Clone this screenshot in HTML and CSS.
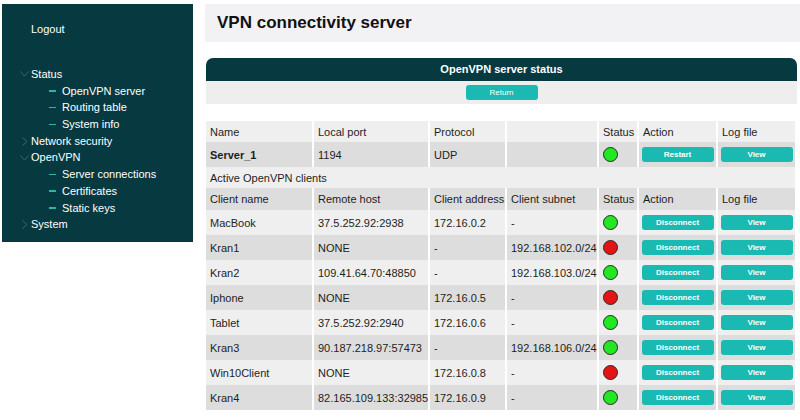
FILE: index.html
```html
<!DOCTYPE html>
<html lang="en">
<head>
<meta charset="utf-8">
<title>VPN connectivity server</title>
<link rel="stylesheet" href="styles.css">
</head>
<body>
<aside class="sidebar">
  <div class="logout">Logout</div>
  <ul class="nav">
    <li class="group open"><span class="chev"><svg width="9" height="6" viewBox="0 0 9 6"><path d="M0.5 0.5 L4.5 5 L8.5 0.5" fill="none" stroke="currentColor" stroke-width="1"/></svg></span>Status</li>
    <li class="sub"><span class="dash"></span>OpenVPN server</li>
    <li class="sub"><span class="dash"></span>Routing table</li>
    <li class="sub"><span class="dash"></span>System info</li>
    <li class="group"><span class="chev"><svg width="9" height="9" viewBox="0 0 9 9"><path d="M2.5 0.5 L7 4.5 L2.5 8.5" fill="none" stroke="currentColor" stroke-width="1"/></svg></span>Network security</li>
    <li class="group open"><span class="chev"><svg width="9" height="6" viewBox="0 0 9 6"><path d="M0.5 0.5 L4.5 5 L8.5 0.5" fill="none" stroke="currentColor" stroke-width="1"/></svg></span>OpenVPN</li>
    <li class="sub"><span class="dash"></span>Server connections</li>
    <li class="sub"><span class="dash"></span>Certificates</li>
    <li class="sub"><span class="dash"></span>Static keys</li>
    <li class="group"><span class="chev"><svg width="9" height="9" viewBox="0 0 9 9"><path d="M2.5 0.5 L7 4.5 L2.5 8.5" fill="none" stroke="currentColor" stroke-width="1"/></svg></span>System</li>
  </ul>
</aside>

<main class="main">
  <header class="page-title"><h1>VPN connectivity server</h1></header>

  <section class="panel">
    <div class="panel-head">OpenVPN server status</div>
    <div class="panel-bar"><button class="btn btn-return">Return</button></div>
  </section>

  <table class="status">
    <colgroup>
      <col class="c-name"><col class="c-host"><col class="c-addr"><col class="c-subnet"><col class="c-state"><col class="c-action"><col class="c-log">
    </colgroup>
    <tbody>
      <tr class="head"><td>Name</td><td>Local port</td><td>Protocol</td><td></td><td>Status</td><td>Action</td><td>Log file</td></tr>
      <tr class="row"><td class="strong">Server_1</td><td>1194</td><td>UDP</td><td></td><td><span class="dot on"></span></td><td class="act"><button class="btn">Restart</button></td><td class="act"><button class="btn">View</button></td></tr>
      <tr class="head"><td colspan="7" class="caption">Active OpenVPN clients</td></tr>
      <tr class="head tall"><td>Client name</td><td>Remote host</td><td>Client address</td><td>Client subnet</td><td>Status</td><td>Action</td><td>Log file</td></tr>
      <tr class="row"><td>MacBook</td><td>37.5.252.92:2938</td><td>172.16.0.2</td><td>-</td><td><span class="dot on"></span></td><td class="act"><button class="btn">Disconnect</button></td><td class="act"><button class="btn">View</button></td></tr>
      <tr class="row"><td>Kran1</td><td>NONE</td><td>-</td><td>192.168.102.0/24</td><td><span class="dot off"></span></td><td class="act"><button class="btn">Disconnect</button></td><td class="act"><button class="btn">View</button></td></tr>
      <tr class="row"><td>Kran2</td><td>109.41.64.70:48850</td><td>-</td><td>192.168.103.0/24</td><td><span class="dot on"></span></td><td class="act"><button class="btn">Disconnect</button></td><td class="act"><button class="btn">View</button></td></tr>
      <tr class="row"><td>Iphone</td><td>NONE</td><td>172.16.0.5</td><td>-</td><td><span class="dot off"></span></td><td class="act"><button class="btn">Disconnect</button></td><td class="act"><button class="btn">View</button></td></tr>
      <tr class="row"><td>Tablet</td><td>37.5.252.92:2940</td><td>172.16.0.6</td><td>-</td><td><span class="dot on"></span></td><td class="act"><button class="btn">Disconnect</button></td><td class="act"><button class="btn">View</button></td></tr>
      <tr class="row"><td>Kran3</td><td>90.187.218.97:57473</td><td>-</td><td>192.168.106.0/24</td><td><span class="dot on"></span></td><td class="act"><button class="btn">Disconnect</button></td><td class="act"><button class="btn">View</button></td></tr>
      <tr class="row"><td>Win10Client</td><td>NONE</td><td>172.16.0.8</td><td>-</td><td><span class="dot off"></span></td><td class="act"><button class="btn">Disconnect</button></td><td class="act"><button class="btn">View</button></td></tr>
      <tr class="row"><td>Kran4</td><td>82.165.109.133:32985</td><td>172.16.0.9</td><td>-</td><td><span class="dot on"></span></td><td class="act"><button class="btn">Disconnect</button></td><td class="act"><button class="btn">View</button></td></tr>
    </tbody>
  </table>
</main>
</body>
</html>
```

FILE: styles.css
```css
* { box-sizing: border-box; }

html, body {
  margin: 0;
  padding: 0;
  background: #ffffff;
}

body {
  display: flex;
  align-items: flex-start;
  font-family: "Liberation Sans", Arial, Helvetica, sans-serif;
  color: #1e1e1e;
  width: 800px;
  overflow: hidden;
}

/* ---------- sidebar ---------- */
.sidebar {
  flex: 0 0 191px;
  width: 191px;
  height: 238px;
  margin: 4px 0 0 2px;
  padding-top: 17px;
  background: #073a40;
  color: #ffffff;
  font-size: 11px;
}

.logout {
  padding-left: 29px;
  line-height: 17px;
}

.nav {
  list-style: none;
  margin: 28px 0 0;
  padding: 0;
}

.nav li {
  display: flex;
  align-items: center;
  height: 16.7px;
  line-height: 16.7px;
  white-space: nowrap;
}

.nav .group { padding-left: 16px; }

.chev {
  display: inline-flex;
  align-items: center;
  justify-content: center;
  width: 13px;
  margin-right: 0;
  color: #2f6a6d;
}

.nav .sub { padding-left: 47px; }

.dash {
  display: inline-block;
  width: 7px;
  height: 1.5px;
  margin-right: 6px;
  background: #2fb3a6;
}

/* ---------- main column ---------- */
.main {
  flex: 1;
  margin-left: 12px;
  padding-top: 4px;
}

.page-title {
  height: 38px;
  background: #f2f2f4;
  display: flex;
  align-items: center;
  padding-left: 12px;
}

.page-title h1 {
  margin: 0;
  font-size: 17px;
  font-weight: bold;
  color: #111;
}

.panel {
  margin: 16px 3px 0 1px;
}

.panel-head {
  height: 23px;
  line-height: 23px;
  background: #073a40;
  border-radius: 7px 7px 0 0;
  color: #fff;
  text-align: center;
  font-size: 11px;
  font-weight: bold;
}

.panel-bar {
  height: 23px;
  background: #eeeeee;
  display: flex;
  align-items: center;
  justify-content: center;
}

.btn {
  display: inline-block;
  width: 72px;
  height: 15px;
  padding: 0;
  border: 0;
  border-radius: 3px;
  background: #1ab9b1;
  color: #fff;
  font-family: "Liberation Sans", Arial, sans-serif;
  font-size: 8px;
  font-weight: bold;
  line-height: 15px;
  text-align: center;
}

.btn-return { font-weight: normal; }

/* ---------- status table ---------- */
.status {
  margin: 17px 0 0 1px;
  width: 589px;
  table-layout: fixed;
  border-collapse: separate;
  border-spacing: 0;
  font-size: 11px;
}

.c-name   { width: 106px; }
.c-host   { width: 116px; }
.c-addr   { width: 77px; }
.c-subnet { width: 92px; }
.c-state  { width: 40px; }
.c-action { width: 79px; }
.c-log    { width: 79px; }

.status td {
  padding: 0 0 0 4px;
  border-left: 2px solid #fff;
  white-space: nowrap;
  overflow: hidden;
  vertical-align: middle;
}

.status td:first-child { border-left: 0; }

.status tr { height: 25px; }
.status tr.head { height: 21px; }
.status tr.head.tall { height: 22px; }

.status tr:nth-child(odd) td { background: #efefef; }
.status tr:nth-child(even) td { background: #dddddd; }

.status td.strong { font-weight: bold; }

.status td.act {
  padding: 0;
  text-align: center;
}

.dot {
  display: block;
  width: 15px;
  height: 15px;
  border-radius: 50%;
  border: 1px solid #2a2a2a;
}

.dot.on  { background: #22e822; }
.dot.off { background: #e41414; }
```
